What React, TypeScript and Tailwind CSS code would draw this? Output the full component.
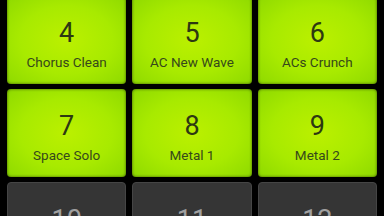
import React from "react";

const tiles = [
  { n: "4", label: "Chorus Clean", on: true },
  { n: "5", label: "AC New Wave", on: true },
  { n: "6", label: "ACs Crunch", on: true },
  { n: "7", label: "Space Solo", on: true },
  { n: "8", label: "Metal 1", on: true },
  { n: "9", label: "Metal 2", on: true },
  { n: "10", label: "", on: false },
  { n: "11", label: "", on: false },
  { n: "12", label: "", on: false },
];

export default function App() {
  return (
    <div
      className="w-[384px] h-[216px] overflow-hidden bg-black"
      style={{ fontFamily: "Roboto, 'Noto Sans', sans-serif" }}
    >
      <div className="grid grid-cols-3 gap-x-[6px] gap-y-[5px] px-[7px] -mt-[4px]">
        {tiles.map((t) =>
          t.on ? (
            <div
              key={t.n}
              className="h-[88px] rounded-[4px] flex flex-col items-center pt-[22px] bg-[radial-gradient(ellipse_at_center,#bbf000_0%,#a8ea00_55%,#8ed900_100%)] shadow-[inset_0_0_3px_rgba(0,0,0,0.6)]"
            >
              <div className="h-[30px] leading-[30px] text-[27px] text-[#2d3812]">{t.n}</div>
              <div className="mt-[6px] h-[16px] leading-[16px] text-[13.5px] text-[#36481b]">{t.label}</div>
            </div>
          ) : (
            <div
              key={t.n}
              className="h-[88px] rounded-[4px] flex flex-col items-center pt-[22px] bg-[#353535] border border-[#454545]"
            >
              <div className="h-[30px] leading-[30px] text-[27px] text-[#a0a0a0]">{t.n}</div>
            </div>
          )
        )}
      </div>
    </div>
  );
}
